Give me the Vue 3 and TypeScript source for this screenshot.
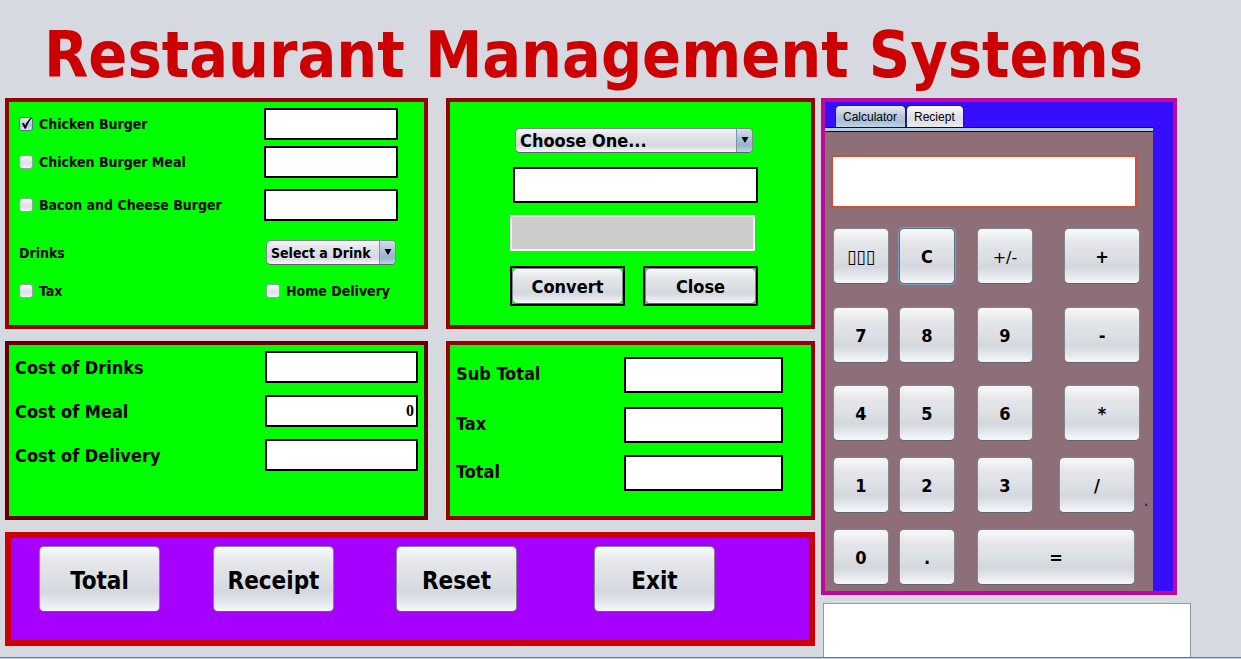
<script setup lang="ts">
import { reactive, ref } from 'vue'

interface MealItem {
  id: string
  label: string
  picked: boolean
  qty: string
}

interface CalcKey {
  id: string
  text: string
  kind?: string
}

const meals = reactive<MealItem[]>([
  { id: 'burger', label: 'Chicken Burger', picked: true, qty: '' },
  { id: 'burger-meal', label: 'Chicken Burger Meal', picked: false, qty: '' },
  { id: 'bacon', label: 'Bacon and Cheese Burger', picked: false, qty: '' },
])

const drink = ref('Select a Drink')
const withTax = ref(false)
const homeDelivery = ref(false)

const currency = ref('Choose One...')
const amount = ref('')
const converted = ref('')

const costs = reactive([
  { id: 'cost-drinks', label: 'Cost of Drinks', value: '' },
  { id: 'cost-meal', label: 'Cost of Meal', value: '0' },
  { id: 'cost-delivery', label: 'Cost of Delivery', value: '' },
])

const totals = reactive([
  { id: 'sub-total', label: 'Sub Total', value: '' },
  { id: 'tax-total', label: 'Tax', value: '' },
  { id: 'grand-total', label: 'Total', value: '' },
])

const actions = ['Total', 'Receipt', 'Reset', 'Exit']
const tabs = ['Calculator', 'Reciept']
const activeTab = ref('Calculator')
const display = ref('')
const notes = ref('')

const upperKeys: CalcKey[] = [
  { id: 'back', text: '▯▯▯', kind: 'thin' },
  { id: 'clear', text: 'C', kind: 'focused' },
  { id: 'sign', text: '+/-', kind: 'light' },
  { id: 'plus', text: '+', kind: 'wide' },
  { id: '7', text: '7' },
  { id: '8', text: '8' },
  { id: '9', text: '9' },
  { id: 'minus', text: '-', kind: 'wide' },
  { id: '4', text: '4' },
  { id: '5', text: '5' },
  { id: '6', text: '6' },
  { id: 'times', text: '*', kind: 'wide' },
]

const lowerKeys: CalcKey[] = [
  { id: '1', text: '1' },
  { id: '2', text: '2' },
  { id: '3', text: '3' },
  { id: 'divide', text: '/', kind: 'wide' },
  { id: '0', text: '0' },
  { id: 'point', text: '.' },
  { id: 'equals', text: '=', kind: 'double' },
]

function press(key: CalcKey): void {
  if (key.id === 'clear') display.value = ''
  else if (key.id === 'back') display.value = display.value.slice(0, -1)
  else if (/^[0-9.]$/.test(key.text)) display.value += key.text
}
</script>

<template>
  <div class="app">
    <header class="header">
      <h1>Restaurant Management Systems</h1>
    </header>

    <main class="main">
      <div class="left">
        <section class="panel order">
          <template v-for="meal in meals" :key="meal.id">
            <label class="check">
              <span class="tick">
                <input v-model="meal.picked" type="checkbox" />
                <svg v-if="meal.picked" viewBox="0 0 14 14" aria-hidden="true">
                  <path d="M3 6.4 L4.8 5.8 L6.2 8.6 C7.6 5.2 9.6 2.6 12.6 0.6 L12.9 1.1 C10.2 4.2 8.4 7.6 7 11.8 L5.6 11.8 Z" />
                </svg>
              </span>
              {{ meal.label }}
            </label>
            <input v-model="meal.qty" class="field" type="text" :aria-label="meal.label + ' quantity'" />
          </template>
          <label class="text" for="drink">Drinks</label>
          <span class="combo combo-small">
            <select id="drink" v-model="drink">
              <option>Select a Drink</option>
            </select>
            <svg viewBox="0 0 8 6" aria-hidden="true"><path d="M0.5 0 H7.5 L4 6 Z" /></svg>
          </span>
          <label class="check">
            <span class="tick"><input v-model="withTax" type="checkbox" /></span>
            Tax
          </label>
          <label class="check delivery">
            <span class="tick"><input v-model="homeDelivery" type="checkbox" /></span>
            Home Delivery
          </label>
        </section>

        <section class="panel convert">
          <span class="combo combo-large">
            <select v-model="currency" aria-label="Currency">
              <option>Choose One...</option>
            </select>
            <svg viewBox="0 0 8 6" aria-hidden="true"><path d="M0.5 0 H7.5 L4 6 Z" /></svg>
          </span>
          <input v-model="amount" class="field amount" type="text" aria-label="Amount" />
          <input v-model="converted" class="field result" type="text" aria-label="Converted amount" readonly />
          <div class="convert-buttons">
            <span class="frame"><button type="button">Convert</button></span>
            <span class="frame"><button type="button">Close</button></span>
          </div>
        </section>

        <section class="panel costs">
          <template v-for="cost in costs" :key="cost.id">
            <label :for="cost.id">{{ cost.label }}</label>
            <input :id="cost.id" v-model="cost.value" class="field" type="text" />
          </template>
        </section>

        <section class="panel totals">
          <template v-for="total in totals" :key="total.id">
            <label :for="total.id">{{ total.label }}</label>
            <input :id="total.id" v-model="total.value" class="field" type="text" />
          </template>
        </section>

        <section class="actions">
          <button v-for="action in actions" :key="action" type="button">{{ action }}</button>
        </section>
      </div>

      <div class="right">
        <section class="side">
          <div class="tabs" role="tablist">
            <button
              v-for="tab in tabs"
              :key="tab"
              type="button"
              role="tab"
              :class="{ active: tab === activeTab }"
              :aria-selected="tab === activeTab"
              @click="activeTab = tab"
            >
              {{ tab }}
            </button>
          </div>
          <div class="sheet">
            <input v-model="display" class="display" type="text" aria-label="Calculator display" />
            <div class="keys upper">
              <button v-for="key in upperKeys" :key="key.id" type="button" :class="key.kind" @click="press(key)">
                {{ key.text }}
              </button>
            </div>
            <div class="keys lower">
              <template v-for="key in lowerKeys" :key="key.id">
                <button type="button" :class="key.kind" @click="press(key)">{{ key.text }}</button>
                <span v-if="key.id === 'divide'" class="dot">.</span>
              </template>
            </div>
          </div>
        </section>
        <textarea v-model="notes" class="notes" aria-label="Receipt text"></textarea>
      </div>
    </main>
    <footer class="edge"></footer>
  </div>
</template>

<style>
body {
  margin: 0;
  background: #d6d9df;
}
</style>

<style scoped>
.app {
  display: flex;
  flex-direction: column;
  min-height: 100vh;
  box-sizing: border-box;
  overflow: hidden;
  background: #d6d9df;
  color: #000;
  font-family: "DejaVu Sans Condensed", "DejaVu Sans", Tahoma, sans-serif;
  font-weight: bold;
  font-size: 14px;
}

.app *,
.app *::before {
  box-sizing: border-box;
}

.header {
  height: 98px;
  padding-left: 44px;
}

h1 {
  margin: 0;
  padding-top: 17px;
  font-size: 64px;
  line-height: 76px;
  color: #cc0000;
  white-space: nowrap;
}

.main {
  flex: 1;
  display: grid;
  grid-template-columns: 810fr 420fr;
  column-gap: 6px;
  padding-left: 5px;
}

.left {
  display: grid;
  grid-template-columns: 423fr 369fr;
  gap: 12px 18px;
  align-content: start;
}

.panel {
  border: 4px solid #990000;
  background: #00ff00;
}

input,
select,
button,
textarea {
  font: inherit;
  color: inherit;
  margin: 0;
}

button,
select {
  border: 1px solid #81858d;
  border-bottom-color: #5f636b;
  border-radius: 5px;
  background: linear-gradient(#f8f9fa 0%, #e4e6ea 25%, #dcdfe4 50%, #d4d7dd 70%, #e4e7ed 86%, #f6f8fc 100%);
}

button {
  padding: 0;
}

.field {
  width: 100%;
  height: 32px;
  padding: 0 2px;
  border: 2px solid #000;
  border-radius: 0;
  background: #fff;
}

/* Order panel */
.order {
  display: grid;
  grid-template-columns: 245fr 160fr;
  grid-template-rows: 38px 37px 49px 47px 30px;
  align-items: center;
  padding: 3px 0 19px 10px;
}

.order .field {
  width: 134px;
}

.check {
  display: flex;
  align-items: center;
  gap: 6px;
}

.delivery {
  margin-left: 2px;
}

.tick {
  position: relative;
  width: 14px;
  height: 14px;
}

.tick input {
  display: block;
  appearance: none;
  width: 14px;
  height: 14px;
  border: 1px solid #9a9fa8;
  border-radius: 3px;
  background: linear-gradient(#f9fafb, #dcdfe4 60%, #f0f2f6);
}

.tick input:checked {
  border-color: #5a708c;
  background: linear-gradient(#e9eff6, #afc2d6 60%, #d3e2f2);
}

.tick svg {
  position: absolute;
  inset: 0;
  width: 14px;
  height: 14px;
  pointer-events: none;
}

.combo {
  position: relative;
  display: block;
  height: 25px;
}

.combo select {
  appearance: none;
  display: block;
  width: 100%;
  height: 25px;
  padding: 0 18px 0 4px;
  line-height: 22px;
}

.combo::after {
  content: "";
  position: absolute;
  top: 1px;
  right: 1px;
  bottom: 1px;
  width: 15px;
  border-left: 1px solid #7d93ab;
  border-radius: 0 4px 4px 0;
  background: linear-gradient(#d3deea, #a9bfd4 50%, #98b2cb 70%, #bdd2e6);
  pointer-events: none;
}

.combo svg {
  position: absolute;
  z-index: 1;
  top: 9px;
  right: 4px;
  width: 8px;
  height: 6px;
  pointer-events: none;
}

.combo-small {
  width: 130px;
  margin-left: 2px;
}

/* Convert panel */
.convert {
  display: flex;
  flex-direction: column;
  padding: 26px 53px 0 60px;
  font-size: 18px;
}

.combo-large {
  margin: 0 5px 14px;
}

.convert .field {
  height: 36px;
}

.amount {
  width: auto;
  margin: 0 0 12px 3px;
}

.convert .result {
  width: auto;
  margin: 0 3px 15px 0;
  border-color: #f4f4f4;
  background: #cccccc;
}

.convert-buttons {
  display: grid;
  grid-template-columns: 1fr 1fr;
  gap: 18px;
}

.frame {
  display: flex;
  height: 40px;
  border: 2px solid #000;
}

.frame button {
  flex: 1;
}

/* Cost and total panels */
.costs,
.totals {
  display: grid;
  align-content: start;
  font-size: 18px;
}

.costs {
  grid-template-columns: 250fr 153fr;
  grid-auto-rows: 44px;
  min-height: 179px;
  padding: 6px;
  border-color: #660000;
}

.costs .field {
  font-family: "Liberation Serif", serif;
  font-size: 16px;
  text-align: right;
}

.totals {
  grid-template-columns: 168fr 159fr;
  grid-template-rows: 50px 48px 36px;
  padding: 12px 28px 0 6px;
}

.totals .field {
  height: 36px;
}

.costs label,
.totals label {
  line-height: 34px;
}

/* Action bar */
.actions {
  grid-column: 1 / -1;
  display: grid;
  grid-template-columns: 174fr 183fr 198fr 215fr;
  height: 114px;
  padding: 8px 0 0 28px;
  border: 6px solid #cc0000;
  background: #a600ff;
}

.actions button {
  width: 121px;
  height: 66px;
  padding-top: 3px;
  font-size: 24px;
}

/* Calculator side */
.right {
  display: flex;
  flex-direction: column;
}

.side {
  margin-right: 64px;
  padding-right: 20px;
  border: 4px solid #c0089a;
  background: #370efb;
}

.tabs {
  display: flex;
  padding: 3px 0 0 10px;
}

.tabs button {
  height: 22px;
  padding: 0 8px 0 7px;
  border: 1px solid #20206a;
  border-bottom: 0;
  border-radius: 5px 5px 0 0;
  background: linear-gradient(#fbfbfc, #dcdfe4 55%, #e8eaee);
  font-family: "Liberation Sans", Arial, sans-serif;
  font-size: 12px;
  font-weight: normal;
}

.tabs .active {
  background: linear-gradient(#e6edf4, #b4c6d8 50%, #a9c0d6 75%, #bdd3e8);
}

.sheet {
  padding: 0 0 6px;
  background: #8f6f77;
}

.sheet::before {
  content: "";
  display: block;
  height: 5px;
  border: solid #0a0a30;
  border-width: 1px 0;
  background: #b4cce4;
}

.display {
  display: block;
  width: calc(100% - 22px);
  height: 53px;
  margin: 23px 16px 20px 6px;
  padding: 0 4px;
  border: 2px solid #d64d33;
  background: #fff;
  font-size: 18px;
}

.keys {
  display: grid;
  padding-left: 8px;
  font-size: 18px;
}

.keys button {
  width: 56px;
  height: 56px;
}

.keys .wide,
.keys .double {
  width: 100%;
}

.keys .double {
  grid-column: span 2;
}

.keys .thin {
  font-size: 19px;
  font-weight: normal;
}

.keys .light {
  padding-top: 3px;
  font-family: "DejaVu Sans", sans-serif;
  font-size: 16px;
  font-weight: normal;
}

.keys .focused {
  border-color: #4f708f;
  box-shadow: 0 0 0 1px #7a9cbd;
}

.upper {
  grid-template-columns: 66fr 78fr 87fr 76fr;
  grid-template-rows: 79px 78px 56px;
  padding-right: 13px;
  margin-bottom: 16px;
}

.lower {
  grid-template-columns: 66fr 78fr 82fr 76fr 18px;
  row-gap: 16px;
}

.dot {
  align-self: end;
  padding-left: 4px;
  text-align: center;
  color: #38108c;
  font-size: 12px;
  line-height: 22px;
}

.notes {
  flex: 1;
  display: block;
  min-height: 54px;
  margin: 8px 50px 0 2px;
  padding: 4px;
  border: 1px solid #9297a1;
  border-bottom: 0;
  background: #fff;
  resize: none;
}

.edge {
  height: 2px;
  border-top: 1px solid #3a85c0;
  background: #b9cfe6;
}
</style>
